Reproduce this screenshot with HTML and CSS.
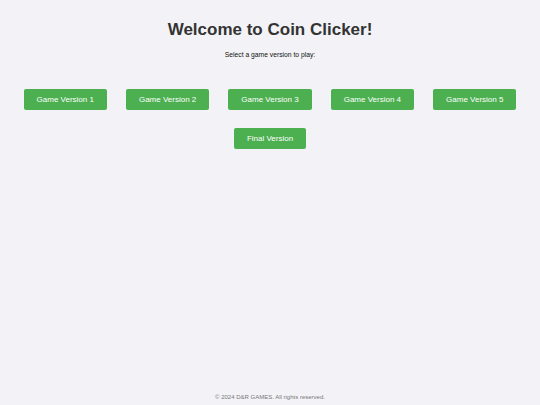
FILE: index.html
```html
<!DOCTYPE html>
<html lang="en">
<head>
    <meta charset="UTF-8">
    <meta name="viewport" content="width=device-width, initial-scale=1.0">
    <title>Coin Clicker</title>
    <link rel="stylesheet" href="styles.css">
</head>
<body>
    <main class="menu">
        <h1>Welcome to Coin Clicker!</h1>
        <p class="subtitle">Select a game version to play:</p>

        <div class="version-list">
            <a class="version-btn" href="#">Game Version 1</a>
            <a class="version-btn" href="#">Game Version 2</a>
            <a class="version-btn" href="#">Game Version 3</a>
            <a class="version-btn" href="#">Game Version 4</a>
            <a class="version-btn" href="#">Game Version 5</a>
            <a class="version-btn" href="#">Final Version</a>
        </div>
    </main>

    <footer class="footer">
        &copy; 2024 D&amp;R GAMES. All rights reserved.
    </footer>
</body>
</html>
```

FILE: styles.css
```css
body {
    margin: 0;
    font-family: 'Liberation Sans', Arial, sans-serif;
    background-color: #f3f3f7;
    color: #333;
    min-height: 100vh;
    display: flex;
    flex-direction: column;
}
.menu {
    flex: 1;
    text-align: center;
}
h1 {
    font-size: 17px;
    line-height: 20px;
    margin: 20px 0 0;
    color: #333;
}
.subtitle {
    font-size: 6.75px;
    line-height: 8px;
    margin: 11px 0 0;
    color: #111;
}
.version-list {
    display: flex;
    flex-wrap: wrap;
    justify-content: center;
    column-gap: 19px;
    row-gap: 18px;
    margin: 30px 20px 0;
}
.version-btn {
    display: block;
    height: 21px;
    line-height: 21px;
    padding: 0 13px;
    background-color: #4caf50;
    color: white;
    font-size: 8px;
    text-decoration: none;
    border-radius: 2px;
}
.version-btn:hover {
    background-color: #45a049;
}
.footer {
    text-align: center;
    font-size: 6px;
    line-height: 8px;
    color: #777;
    padding-bottom: 4px;
}
```
